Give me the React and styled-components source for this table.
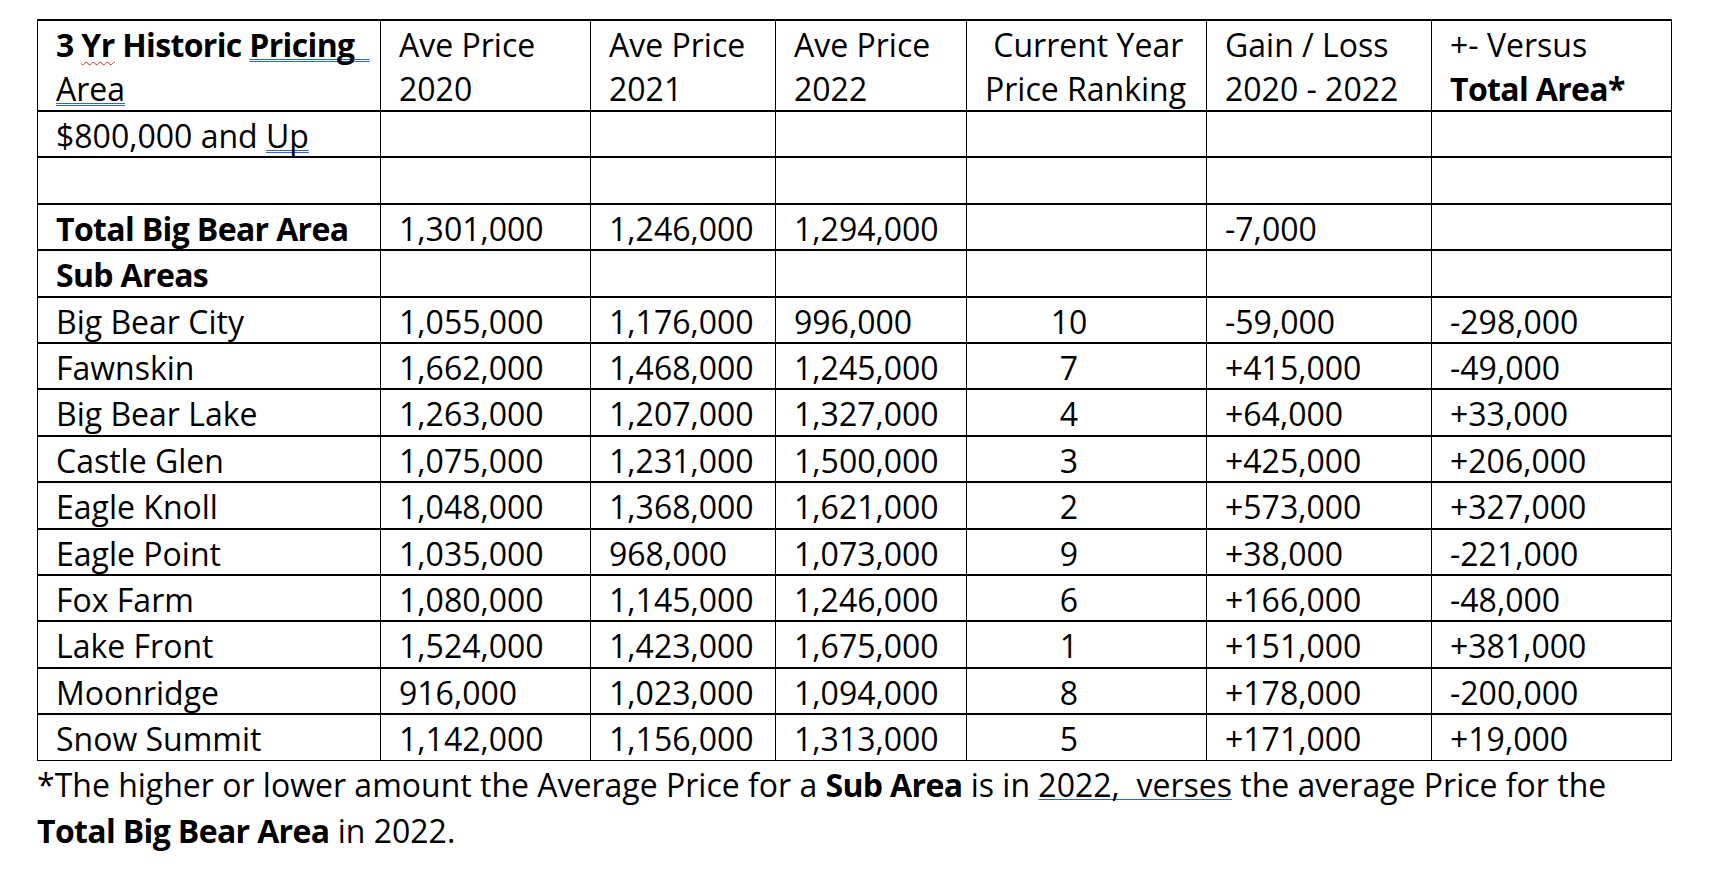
import React from 'react'
import styled, { createGlobalStyle, css } from 'styled-components'

const GlobalStyle = createGlobalStyle`
  html, body {
    margin: 0;
    padding: 0;
    background: #fff;
  }
  body {
    font-family: "Open Sans", "Liberation Sans", sans-serif;
    color: #000;
  }
`

const Page = styled.div`
  padding: 19px 0 0 37px;
`

const Sheet = styled.div`
  display: grid;
  grid-template-columns: 343px 210px 185px 191px 240px 225px 240px;
  grid-template-rows: 91px repeat(13, 46.4px) 45.5px;
  width: max-content;
  border-top: 2px solid #000;
  border-left: 1px solid #000;
`

const Cell = styled.div`
  box-sizing: border-box;
  border-right: 1px solid #000;
  border-bottom: ${p => (p.$last ? 1 : 2)}px solid #000;
  padding: 2px 4px 0 18px;
  font-size: 32px;
  line-height: 44px;
  white-space: nowrap;
  ${p =>
    p.$center &&
    css`
      text-align: center;
      padding: 2px 53px 0 18px;
    `}
`

const Strong = styled.b`
  font-weight: 700;
  letter-spacing: -0.65px;
`

const Mark = styled.span`
  text-decoration-line: underline;
  text-decoration-style: ${p => p.$kind};
  text-decoration-color: ${p => (p.$kind === 'wavy' ? '#e3241c' : '#2d64d8')};
  text-decoration-thickness: 1px;
  text-underline-offset: ${p => (p.$kind === 'wavy' ? '4px' : '2px')};
  text-decoration-skip-ink: none;
`

const Note = styled.p`
  margin: 0;
  padding-top: 1px;
  font-size: 32px;
  line-height: 46.5px;
`

const headers = [
  <>
    <Strong>
      3 <Mark $kind="wavy">Yr</Mark> Historic <Mark $kind="double">Pricing{'\u00a0\u00a0'}</Mark>
    </Strong>
    <br />
    <Mark $kind="double">Area</Mark>
  </>,
  <>Ave Price<br />2020</>,
  <>Ave Price<br />2021</>,
  <>Ave Price<br />2022</>,
  <>{'\u00a0'}Current Year<br />Price Ranking</>,
  <>Gain / Loss<br />2020 - 2022</>,
  <>+- Versus<br /><Strong>Total Area*</Strong></>,
]

const topRows = [
  [<>$800,000 and <Mark $kind="double">Up</Mark></>, '', '', '', '', '', ''],
  ['', '', '', '', '', '', ''],
  [<Strong>Total Big Bear Area</Strong>, '1,301,000', '1,246,000', '1,294,000', '', '-7,000', ''],
  [<Strong>Sub Areas</Strong>, '', '', '', '', '', ''],
]

const areas = [
  ['Big Bear City', '1,055,000', '1,176,000', '996,000', '10', '-59,000', '-298,000'],
  ['Fawnskin', '1,662,000', '1,468,000', '1,245,000', '7', '+415,000', '-49,000'],
  ['Big Bear Lake', '1,263,000', '1,207,000', '1,327,000', '4', '+64,000', '+33,000'],
  ['Castle Glen', '1,075,000', '1,231,000', '1,500,000', '3', '+425,000', '+206,000'],
  ['Eagle Knoll', '1,048,000', '1,368,000', '1,621,000', '2', '+573,000', '+327,000'],
  ['Eagle Point', '1,035,000', '968,000', '1,073,000', '9', '+38,000', '-221,000'],
  ['Fox Farm', '1,080,000', '1,145,000', '1,246,000', '6', '+166,000', '-48,000'],
  ['Lake Front', '1,524,000', '1,423,000', '1,675,000', '1', '+151,000', '+381,000'],
  ['Moonridge', '916,000', '1,023,000', '1,094,000', '8', '+178,000', '-200,000'],
  ['Snow Summit', '1,142,000', '1,156,000', '1,313,000', '5', '+171,000', '+19,000'],
]

export default function App() {
  const body = [...topRows, ...areas]
  return (
    <Page>
      <GlobalStyle />
      <Sheet>
        {headers.map((h, i) => (
          <Cell key={'h' + i}>{h}</Cell>
        ))}
        {body.map((row, r) =>
          row.map((v, c) => (
            <Cell
              key={r + '-' + c}
              $center={c === 4}
              $last={r === body.length - 1}
            >
              {v}
            </Cell>
          ))
        )}
      </Sheet>
      <Note>
        *The higher or lower amount the Average Price for a <Strong>Sub Area</Strong> is in{' '}
        <Mark $kind="solid">2022,{'\u00a0'} verses</Mark> the average Price for the
        <br />
        <Strong>Total Big Bear Area</Strong> in 2022.
      </Note>
    </Page>
  )
}
